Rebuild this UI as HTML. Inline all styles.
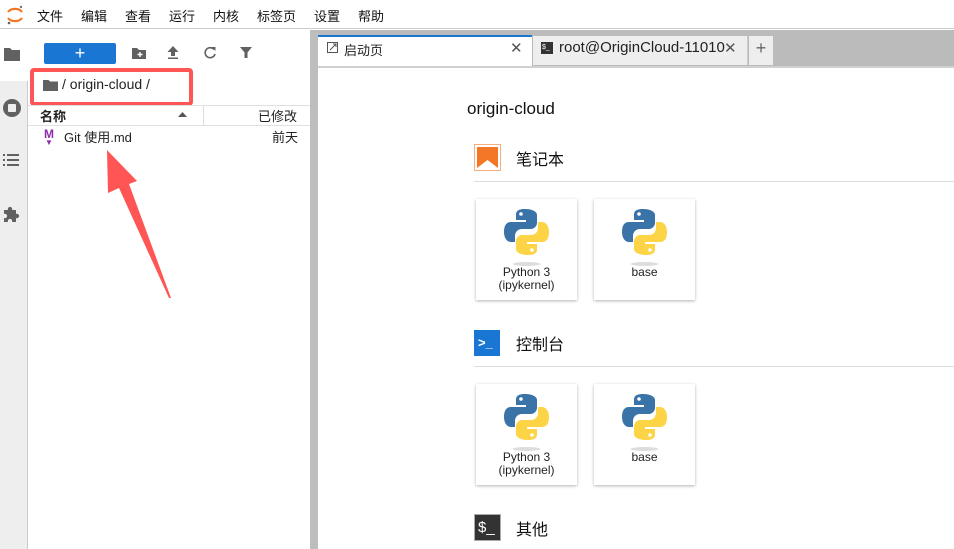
<!DOCTYPE html>
<html><head><meta charset="utf-8"><style>
*{margin:0;padding:0;box-sizing:border-box}
body{width:954px;height:549px;overflow:hidden;background:#fff;font-family:"Liberation Sans","Noto Sans CJK SC",sans-serif;font-size:13px;color:#222;position:relative}
.abs{position:absolute}
.menu{left:0;top:0;width:954px;height:29px;border-bottom:1px solid #ccc;background:#fff}
.menu span{position:absolute;top:6px;font-size:13px;color:#111}
.card{position:absolute;width:101px;height:101px;background:#fff;box-shadow:0 1px 3px rgba(0,0,0,.3);text-align:center;font-size:12px;line-height:13px;color:#222}
.card svg{position:absolute;left:27px;top:8px}
.card div{position:absolute;top:67px;width:100%}
.sec{position:absolute;left:516px;font-size:16px;color:#111}
.hr{position:absolute;left:474px;width:480px;height:1px;background:#ddd}
</style></head><body>
<div class="abs menu">
 <svg class="abs" style="left:5px;top:4px" width="20" height="22" viewBox="0 0 20 22"><path d="M3 8 A8 6 0 0 1 17 8" stroke="#f37726" stroke-width="2.2" fill="none"/><path d="M3 14 A8 6 0 0 0 17 14" stroke="#f37726" stroke-width="2.2" fill="none"/><circle cx="16" cy="3" r="1.2" fill="#767677"/><circle cx="4" cy="19" r="1.3" fill="#616262"/></svg>
 <span style="left:37px">文件</span><span style="left:81px">编辑</span><span style="left:125px">查看</span><span style="left:169px">运行</span><span style="left:213px">内核</span><span style="left:257px">标签页</span><span style="left:314px">设置</span><span style="left:358px">帮助</span>
</div>
<!-- left icon bar -->
<div class="abs" style="left:0;top:81px;width:28px;height:468px;background:#eee;border-right:1px solid #ccc"></div>
<div class="abs" style="left:27px;top:30px;width:1px;height:51px;background:#fff"></div>
<svg class="abs" style="left:3px;top:46px" width="18" height="16" viewBox="0 0 18 16"><path d="M1 2h6l2 2h8v11H1z" fill="#616161"/></svg>
<svg class="abs" style="left:2px;top:98px" width="20" height="20"><circle cx="10" cy="10" r="9" fill="#616161"/><rect x="6" y="6" width="8" height="8" rx="1" fill="#eee"/></svg>
<svg class="abs" style="left:3px;top:153px" width="16" height="14" fill="#616161"><rect x="0" y="1" width="2" height="2"/><rect x="4" y="1" width="12" height="2"/><rect x="0" y="6" width="2" height="2"/><rect x="4" y="6" width="12" height="2"/><rect x="0" y="11" width="2" height="2"/><rect x="4" y="11" width="12" height="2"/></svg>
<svg class="abs" style="left:2px;top:205px" width="18" height="18" viewBox="0 0 18 18"><path d="M2 5h4a2.2 2.2 0 1 1 4 0h4v4a2.2 2.2 0 1 1 0 4v4h-4a2.2 2.2 0 1 0-4 0H2v-4a2.2 2.2 0 1 0 0-4z" fill="#616161"/></svg>
<!-- file browser -->
<div class="abs" style="left:44px;top:43px;width:72px;height:21px;background:#1976d2;border-radius:2px;color:#fff;text-align:center;font-size:18px;line-height:20px">+</div>
<svg class="abs" style="left:131px;top:46px" width="16" height="14"><path d="M1 2h5l2 2h7v9H1z" fill="#616161"/><path d="M9 6v5M6.5 8.5h5" stroke="#fff" stroke-width="1.4"/></svg>
<svg class="abs" style="left:166px;top:45px" width="14" height="15"><path d="M7 1L1.5 7H5v4h4V7h3.5z M2 12.5h10v1.5H2z" fill="#616161"/></svg>
<svg class="abs" style="left:203px;top:45px" width="14" height="15"><path d="M11 4.5A5 5 0 1 0 12 9" stroke="#616161" stroke-width="1.6" fill="none"/><path d="M8.5 2h4v4z" fill="#616161"/></svg>
<svg class="abs" style="left:239px;top:45px" width="14" height="15"><path d="M1 2h12L8.5 7.5V13h-3V7.5z" fill="#616161"/></svg>
<svg class="abs" style="left:43px;top:79px" width="15" height="13"><path d="M0 1h5.5l1.5 1.5h8V12H0z" fill="#616161"/></svg>
<div class="abs" style="left:62px;top:76px;font-size:14px;color:#222">/ origin-cloud /</div>
<div class="abs" style="left:30px;top:68px;width:163px;height:38px;border:4px solid #f55;border-radius:4px"></div>
<div class="abs" style="left:28px;top:105px;width:282px;height:1px;background:#e0e0e0"></div>
<div class="abs" style="left:40px;top:106px;font-size:13px;font-weight:bold;color:#222">名称</div>
<svg class="abs" style="left:178px;top:112px" width="9" height="6"><path d="M0 5L4.5 0 9 5z" fill="#555"/></svg>
<div class="abs" style="left:203px;top:106px;width:1px;height:19px;background:#ddd"></div>
<div class="abs" style="left:258px;top:106px;font-size:13px;color:#222">已修改</div>
<div class="abs" style="left:28px;top:125px;width:282px;height:1px;background:#e0e0e0"></div>
<div class="abs" style="left:44px;top:129px;font-size:12px;font-weight:bold;color:#8e2aad;line-height:11px">M<div style="font-size:8px;line-height:6px;margin-left:1px">▼</div></div>
<div class="abs" style="left:64px;top:130px;font-size:13px;color:#222;line-height:16px">Git 使用.md</div>
<div class="abs" style="left:272px;top:130px;font-size:13px;color:#222;line-height:16px">前天</div>
<svg class="abs" style="left:0;top:0" width="954" height="549"><polygon points="107,150 137,181 129,184 171,298 169,298 119,188 108,193" fill="#f55"/></svg>
<!-- splitter -->
<div class="abs" style="left:310px;top:30px;width:8px;height:519px;background:#bdbdbd"></div>
<!-- tabs -->
<div class="abs" style="left:318px;top:30px;width:636px;height:38px;background:#bbb"></div>
<div class="abs" style="left:318px;top:35px;width:214px;height:33px;background:#fff;border-top:2px solid #1976d2"></div>
<svg class="abs" style="left:327px;top:42px" width="12" height="12"><rect x=".5" y=".5" width="10" height="10" fill="none" stroke="#555"/><path d="M3 8L9 2M6 2h3v3" stroke="#555" fill="none"/></svg>
<div class="abs" style="left:344px;top:40px;font-size:13px">启动页</div>
<div class="abs" style="left:510px;top:39px;font-size:15px;color:#555">✕</div>
<div class="abs" style="left:533px;top:36px;width:215px;height:29px;background:#eee;border-right:1px solid #ccc"></div>
<div class="abs" style="left:541px;top:42px;width:12px;height:12px;background:#333;color:#fff;font-size:7px;line-height:12px;padding-left:1px">$_</div>
<div class="abs" style="left:559px;top:39px;width:166px;height:19px;overflow:hidden;white-space:nowrap;font-size:15px">root@OriginCloud-110100</div>
<div class="abs" style="left:724px;top:39px;font-size:15px;color:#555">✕</div>
<div class="abs" style="left:749px;top:36px;width:24px;height:29px;background:#eee;text-align:center;font-size:18px;line-height:25px;color:#666">+</div>
<div class="abs" style="left:318px;top:66px;width:636px;height:2px;background:#d0d0d0"></div>
<!-- launcher -->
<div class="abs" style="left:467px;top:99px;font-size:17px;color:#111">origin-cloud</div>
<svg class="abs" style="left:474px;top:144px" width="27" height="27"><rect x=".5" y=".5" width="26" height="26" fill="none" stroke="#f37726" stroke-opacity=".6"/><path d="M3 3h21v21l-10.5-8L3 24z" fill="#f37726"/></svg>
<div class="sec" style="top:146px">笔记本</div>
<div class="hr" style="top:181px"></div>
<div class="abs" style="left:474px;top:330px;width:26px;height:26px;background:#1976d2;color:#fff;font-weight:bold;font-size:13px;line-height:26px;padding-left:4px">&gt;_</div>
<div class="sec" style="top:331px">控制台</div>
<div class="hr" style="top:366px"></div>
<div class="abs" style="left:474px;top:514px;width:27px;height:27px;background:#333;border:1px solid #aaa;color:#fff;font-size:15px;line-height:25px;padding-left:3px">$_</div>
<div class="sec" style="top:516px">其他</div>
<svg width="0" height="0" style="position:absolute"><defs><g id="py"><path d="M22 2c-9 0-9 4-9 6v5h10v2H8c-5 0-7 4-7 10s3 10 7 10h4v-6c0-4 3-7 7-7h9c3 0 6-3 6-6V8c0-3-4-6-12-6z" fill="#3a73a8"/><path d="M25 48c9 0 9-4 9-6v-5H24v-2h15c5 0 7-4 7-10s-3-10-7-10h-4v6c0 4-3 7-7 7h-9c-3 0-6 3-6 6v8c0 3 4 6 12 6z" fill="#fdd445"/><circle cx="18" cy="7" r="1.8" fill="#fff"/><circle cx="29" cy="43" r="1.8" fill="#fff"/><ellipse cx="23.5" cy="57" rx="14" ry="2" fill="#ddd"/></g></defs></svg>
<div class="card" style="left:476px;top:199px"><svg width="47" height="60"><use href="#py"/></svg><div>Python 3<br>(ipykernel)</div></div>
<div class="card" style="left:594px;top:199px"><svg width="47" height="60"><use href="#py"/></svg><div>base</div></div>
<div class="card" style="left:476px;top:384px"><svg width="47" height="60"><use href="#py"/></svg><div>Python 3<br>(ipykernel)</div></div>
<div class="card" style="left:594px;top:384px"><svg width="47" height="60"><use href="#py"/></svg><div>base</div></div>
</body></html>
